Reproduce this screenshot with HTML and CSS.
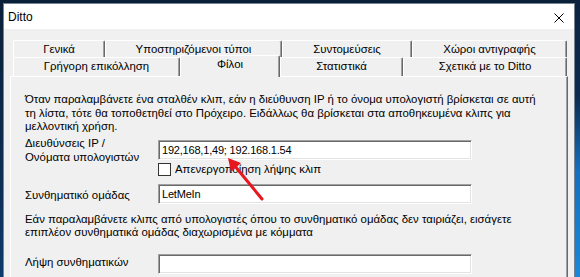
FILE: index.html
```html
<!DOCTYPE html>
<html lang="el">
<head>
    <meta charset="UTF-8">
    <title>Ditto</title>
    <link rel="stylesheet" href="styles.css">
</head>
<body>

<div class="desktop">
    <div class="window">
        <div class="titlebar">
            <span class="title">Ditto</span>
            <svg class="close" width="10" height="10" viewBox="0 0 10 10">
                <path d="M0.5 0.5 L9.5 9.5 M9.5 0.5 L0.5 9.5" stroke="#000" stroke-width="1" fill="none"/>
            </svg>
        </div>

        <div class="client">
            <div class="tabs tabs-back">
                <div class="tab">Γενικά</div>
                <div class="tab">Υποστηριζόμενοι τύποι</div>
                <div class="tab">Συντομεύσεις</div>
                <div class="tab">Χώροι αντιγραφής</div>
            </div>
            <div class="tabs tabs-front">
                <div class="tab">Γρήγορη επικόλληση</div>
                <div class="tab active">Φίλοι</div>
                <div class="tab">Στατιστικά</div>
                <div class="tab">Σχετικά με το Ditto</div>
            </div>

            <div class="panel">
                <p class="note first">Όταν παραλαμβάνετε ένα σταλθέν κλιπ, εάν η διεύθυνση IP ή το όνομα υπολογιστή βρίσκεται σε αυτή τη λίστα, τότε θα τοποθετηθεί στο Πρόχειρο. Ειδάλλως θα βρίσκεται στα αποθηκευμένα κλιπς για μελλοντική χρήση.</p>

                <div class="field row-ip">
                    <label for="ips">Διευθύνσεις IP /<br>Ονόματα υπολογιστών</label>
                    <input type="text" id="ips" value="192,168,1,49; 192.168.1.54">
                </div>

                <div class="check-row">
                    <span class="checkbox"></span>
                    <span>Απενεργοποίηση λήψης κλιπ</span>
                </div>

                <div class="field row-pass">
                    <label for="pass">Συνθηματικό ομάδας</label>
                    <input type="text" id="pass" value="LetMeIn">
                </div>

                <p class="note second">Εάν παραλαμβάνετε κλιπς από υπολογιστές όπου το συνθηματικό ομάδας δεν ταιριάζει, εισάγετε επιπλέον συνθηματικά ομάδας διαχωρισμένα με κόμματα</p>

                <div class="field row-extra">
                    <label for="extra">Λήψη συνθηματικών</label>
                    <input type="text" id="extra" value="">
                </div>
            </div>
        </div>
    </div>

    <svg class="arrow" width="50" height="55" viewBox="0 0 50 55">
        <line x1="42" y1="49" x2="14" y2="15" stroke="#e8161f" stroke-width="3" stroke-linecap="round"/>
        <polygon points="8,8 21,13 11,22" fill="#e8161f"/>
    </svg>
</div>

</body>
</html>
```

FILE: styles.css
```css
html, body {
    margin: 0;
    padding: 0;
}
body {
    font-family: "Liberation Sans", Arial, sans-serif;
    font-size: 11.4px;
    color: #000;
}
.desktop {
    position: relative;
    width: 580px;
    height: 277px;
    overflow: hidden;
    padding: 3px 0 0 3px;
    box-sizing: border-box;
    background:
        linear-gradient(#0b2340, #0c2b4e 35%, #1470c0 62%, #1a88d8) right top / 5px 100% no-repeat,
        linear-gradient(#0a2038, #0b2d52 60%, #0c3a6c);
}
.window {
    width: 572px;
    height: 300px;
    border: 1px solid #75828f;
    border-bottom: none;
    box-sizing: border-box;
    background-color: #f0f0f0;
}
.titlebar {
    display: flex;
    align-items: center;
    justify-content: space-between;
    height: 25px;
    padding: 0 10px 0 4px;
    background-color: #fff;
}
.title {
    font-size: 12px;
    padding-top: 1px;
}
.close {
    display: block;
    margin-top: 2px;
}
.client {
    padding: 11px 5px 0 6px;
}
.tabs {
    display: grid;
    margin-left: 3px;
}
.tabs-back {
    grid-template-columns: 92px 177px 130px 155px;
    height: 17px;
}
.tabs-front {
    grid-template-columns: 167px 100px 123px 164px;
    height: 19px;
}
.tab {
    text-align: center;
    line-height: 16px;
    border-top: 1px solid #fff;
    border-left: 1px solid #fff;
    border-right: 1px solid #696969;
    box-shadow: inset -1px 0 #a0a0a0;
    border-radius: 2px 2px 0 0;
    background-color: #f0f0f0;
    white-space: nowrap;
}
.tabs-front .tab {
    line-height: 17px;
}
.tab.active {
    position: relative;
    z-index: 1;
    margin-top: -2px;
    margin-bottom: -1px;
    line-height: 17px;
}
.panel {
    width: 558px;
    height: 230px;
    box-sizing: border-box;
    padding: 16px 22px 0 14px;
    border-top: 1px solid #fff;
    border-left: 1px solid #fff;
    border-right: 1px solid #696969;
    box-shadow: inset -1px 0 #a0a0a0;
}
.note {
    margin: 0;
    line-height: 13.5px;
}
.field {
    display: grid;
    grid-template-columns: 133px 314px;
    align-items: start;
}
.field label {
    line-height: 14px;
}
.field input {
    width: 314px;
    height: 20px;
    box-sizing: border-box;
    margin: 0;
    padding: 0 3px;
    font-family: "Liberation Sans", Arial, sans-serif;
    font-size: 11px;
    letter-spacing: -0.2px;
    color: #000;
    background-color: #fff;
    border-top: 1px solid #a0a0a0;
    border-left: 1px solid #a0a0a0;
    border-bottom: 1px solid #fff;
    border-right: 1px solid #fff;
    box-shadow: inset 1px 1px #696969, inset -1px -1px #e3e3e3;
    outline: none;
}
.row-ip {
    margin-top: 6px;
}
.row-ip label {
    margin-top: -4px;
}
.check-row {
    display: flex;
    align-items: center;
    margin: -1px 0 0 133px;
    height: 13px;
}
.checkbox {
    width: 13px;
    height: 13px;
    box-sizing: border-box;
    border: 1px solid #333;
    background-color: #fff;
    margin-right: 4px;
}
.row-pass {
    margin-top: 8px;
}
.row-pass label {
    margin-top: 4px;
}
.second {
    margin-top: 9px;
}
.row-extra {
    margin-top: 14px;
}
.row-extra label {
    margin-top: 1px;
}
.arrow {
    position: absolute;
    left: 220px;
    top: 150px;
}
```
